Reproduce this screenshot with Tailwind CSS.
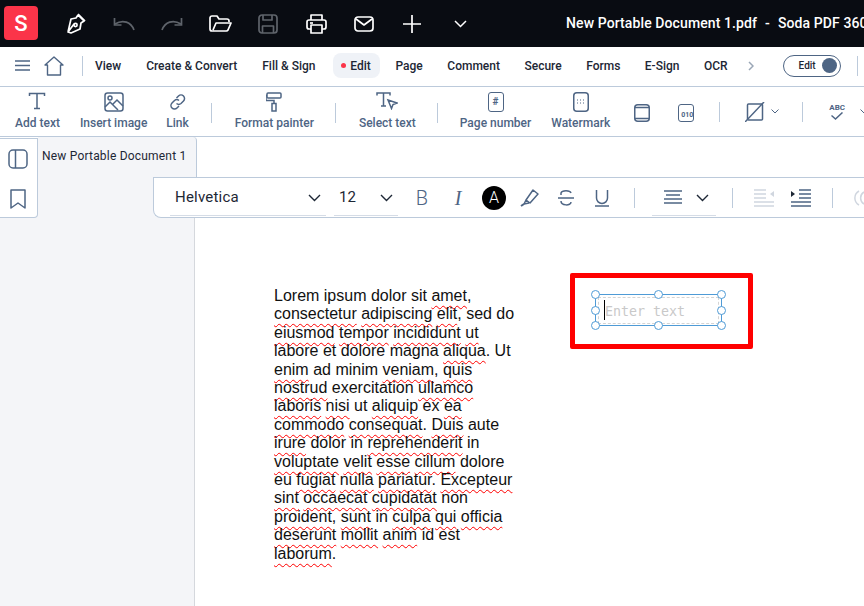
<!DOCTYPE html>
<html lang="en">
<head>
  <meta charset="UTF-8" />
  <title>New Portable Document 1.pdf - Soda PDF 360</title>
  <script src="https://cdn.jsdelivr.net/npm/@tailwindcss/browser@4"></script>
</head>
<body class="w-[864px] h-[606px] overflow-hidden bg-white font-['Roboto',sans-serif]">

  <!-- Title bar -->
  <header class="h-[47px] bg-[#090c12] flex items-center pl-1 text-white whitespace-nowrap overflow-hidden [&>*]:shrink-0">
    <div class="w-[34px] h-[34px] rounded bg-[#fb3449] flex items-center justify-center text-[22px] font-medium -mt-[1px]">S</div>
    <div class="ml-[14px] flex items-center">
      <div class="w-12 flex justify-center"><svg width="22" height="24" viewBox="0 0 22 24" fill="none" stroke="#fff" stroke-width="1.7" stroke-linejoin="round"><path d="M13 3l6 6-3 2-1 6-9 4-3-1 6-8M13 3l-2 3-5 1-3 13"/><circle cx="10.5" cy="13" r="1.6"/><path d="M13 2l7 7"/></svg></div>
      <div class="w-12 flex justify-center"><svg width="22" height="14" viewBox="0 0 22 14" fill="none" stroke="#5f646b" stroke-width="1.7"><path d="M21 13C18 5 10 2 2 7"/><path d="M1.500 1v7h7"/></svg></div>
      <div class="w-12 flex justify-center"><svg width="22" height="14" viewBox="0 0 22 14" fill="none" stroke="#5f646b" stroke-width="1.700"><path d="M1 13C4 5 12 2 20 7"/><path d="M20.500 1v7h-7"/></svg></div>
      <div class="w-12 flex justify-center"><svg width="23" height="18" viewBox="0 0 23 18" fill="none" stroke="#fff" stroke-width="1.7" stroke-linejoin="round"><path d="M3 16a2 2 0 0 1-2-2V3a2 2 0 0 1 2-2h5l2 3h8a2 2 0 0 1 2 2v1"/><path d="M3 16h14a2 2 0 0 0 2-1l3-7H7L4 15"/></svg></div>
      <div class="w-12 flex justify-center"><svg width="20" height="20" viewBox="0 0 20 20" fill="none" stroke="#5f646b" stroke-width="1.700" stroke-linejoin="round"><rect x="1" y="1" width="18" height="18" rx="3"/><path d="M5 1v5h9V1M4.500 19v-7h11v7"/></svg></div>
      <div class="w-12 flex justify-center"><svg width="21" height="20" viewBox="0 0 21 20" fill="none" stroke="#fff" stroke-width="1.700" stroke-linejoin="round"><path d="M5 6V1h11v5"/><rect x="1" y="6" width="19" height="9" rx="2"/><path d="M5 11h11v8H5z" fill="#090c12"/><path d="M4 9h3"/></svg></div>
      <div class="w-12 flex justify-center"><svg width="20" height="16" viewBox="0 0 20 16" fill="none" stroke="#fff" stroke-width="1.700" stroke-linejoin="round"><rect x="1" y="1" width="18" height="14" rx="3"/><path d="M2 3l8 6 8-6"/></svg></div>
      <div class="w-12 flex justify-center"><svg width="18" height="18" viewBox="0 0 18 18" stroke="#fff" stroke-width="1.700"><path d="M9 0v18M0 9h18"/></svg></div>
      <div class="w-12 flex justify-center"><svg width="13" height="8" viewBox="0 0 13 8" fill="none" stroke="#fff" stroke-width="1.500"><path d="M1 1l5.500 5.500L12 1"/></svg></div>
    </div>
    <div class="ml-[82px] text-[14px] font-medium tracking-[0.1px]">New Portable Document 1.pdf<span class="ml-[8px]">-</span><span class="ml-[8px]">Soda PDF 360</span></div>
  </header>

  <!-- Menu row -->
  <nav class="h-[40px] border-b border-[#bccadb] pb-[2px] flex items-center whitespace-nowrap text-[12px] font-medium text-[#1d2735] overflow-hidden [&>*]:shrink-0">
    <div class="w-[44px] flex justify-center"><svg width="15" height="11" viewBox="0 0 15 11" stroke="#4e6584" stroke-width="1.400"><path d="M0 1h15M0 5.500h15M0 10h15"/></svg></div>
    <div class="w-[20px] flex justify-center"><svg width="20" height="20" viewBox="0 0 20 20" fill="none" stroke="#4e6584" stroke-width="1.400" stroke-linejoin="round"><path d="M1 9l9-8 9 8h-2.500v10h-13V9z"/></svg></div>
    <div class="w-px h-5 bg-[#bccadb] ml-[18px] mr-[12px]"></div>
    <div class="flex items-center gap-[25px]">
      <span>View</span>
      <span>Create &amp; Convert</span>
      <span>Fill &amp; Sign</span>
      <span class="-ml-[8px] -mr-[9px] w-[47px] h-[25px] rounded-lg bg-[#eff2f7] flex items-center justify-center gap-[4px]"><span class="w-[5px] h-[5px] rounded-full bg-[#fb3449]"></span>Edit</span>
      <div class="flex items-center gap-[24.5px]">
        <span>Page</span>
        <span>Comment</span>
        <span>Secure</span>
        <span>Forms</span>
        <span>E-Sign</span>
        <span>OCR</span>
      </div>
    </div>
    <svg class="ml-[20px]" width="6" height="10" viewBox="0 0 6 10" fill="none" stroke="#9aa6b6" stroke-width="1.500"><path d="M1 1l4 4-4 4"/></svg>
    <div class="ml-[29px] w-[58px] h-[22px] rounded-full border border-[#4e6584] flex items-center justify-end pr-[3px] gap-[6px] text-[10px]">Edit<span class="w-[15px] h-[15px] rounded-full bg-[#4e6584]"></span></div>
    <div class="w-px h-5 bg-[#bccadb] ml-[16px]"></div>
  </nav>

  <!-- Tool row -->
  <section class="h-[50px] border-b border-[#bccadb] flex items-center pl-[15px] text-[12px] font-medium text-[#4e6584] whitespace-nowrap overflow-hidden [&>*]:shrink-0">
    <div class="flex flex-col items-center h-[40px] justify-between">
      <svg width="18" height="18" viewBox="0 0 18 18" fill="none" stroke="#4e6584" stroke-width="1.500"><path d="M1.500 4V1.500h15V4M9 1.500V16.500M6 16.500h6"/></svg>
      <span>Add text</span>
    </div>
    <div class="ml-[20px] flex flex-col items-center h-[40px] justify-between">
      <svg width="20" height="20" viewBox="0 0 20 20" fill="none" stroke="#4e6584" stroke-width="1.500"><rect x="1" y="1" width="18" height="18" rx="2.500"/><circle cx="6" cy="6" r="2"/><path d="M1 15l5-5 8 8M9 12l4-4 6 6"/></svg>
      <span>Insert image</span>
    </div>
    <div class="ml-[19px] flex flex-col items-center h-[40px] justify-between">
      <svg width="20" height="20" viewBox="0 0 20 20" fill="none" stroke="#4e6584" stroke-width="1.500"><path d="M8.500 6l2-2a3.500 3.500 0 0 1 5 5l-2.500 2.500a3.500 3.500 0 0 1-4.500 0"/><path d="M11 14l-2 2a3.500 3.500 0 0 1-5-5l2.500-2.500a3.500 3.500 0 0 1 4.500 0"/></svg>
      <span>Link</span>
    </div>
    <div class="w-px h-[20px] bg-[#bccadb] ml-[22px] mr-[23px] mt-[2px]"></div>
    <div class="flex flex-col items-center h-[40px] justify-between">
      <svg width="16" height="20" viewBox="0 0 16 20" fill="none" stroke="#4e6584" stroke-width="1.500"><rect x="1" y="1" width="14" height="5" rx="1"/><path d="M1 3.500H0v5h8v3"/><rect x="6" y="11.500" width="4" height="7.500"/></svg>
      <span>Format painter</span>
    </div>
    <div class="w-px h-[20px] bg-[#bccadb] ml-[21px] mr-[23px] mt-[2px]"></div>
    <div class="flex flex-col items-center h-[40px] justify-between">
      <svg width="22" height="18" viewBox="0 0 22 18" fill="none" stroke="#4e6584" stroke-width="1.500"><path d="M1 3.500V1h13v2.500M7.500 1v13M5 14h5M12 8l9 3-4 1.500-1.500 4z"/></svg>
      <span>Select text</span>
    </div>
    <div class="w-px h-[20px] bg-[#bccadb] ml-[21px] mr-[22px] mt-[2px]"></div>
    <div class="flex flex-col items-center h-[40px] justify-between">
      <div class="w-[16px] h-[20px] rounded-[3px] border-[1.5px] border-[#4e6584] flex items-center justify-center text-[10px] font-bold">#</div>
      <span>Page number</span>
    </div>
    <div class="ml-[20px] flex flex-col items-center h-[40px] justify-between">
      <svg width="16" height="20" viewBox="0 0 16 20" fill="none" stroke="#4e6584" stroke-width="1.500"><rect x="0.750" y="0.750" width="14.500" height="18.500" rx="3"/><path d="M4 8h8M4 11h8" stroke-width="1" stroke-dasharray="1 2"/></svg>
      <span>Watermark</span>
    </div>
    <svg class="ml-[24px] mt-[2px]" width="16" height="18" viewBox="0 0 16 18" fill="none" stroke="#4e6584" stroke-width="1.500"><rect x="0.750" y="0.750" width="14.500" height="16.500" rx="3"/><path d="M1 3.500h14M1 14.500h14"/></svg>
    <div class="ml-[28px] mt-[2px] w-[16px] h-[18px] rounded-[3px] border-[1.5px] border-[#4e6584] flex items-end justify-end text-[7px] leading-[10px] font-bold pb-[1px]">010</div>
    <div class="w-px h-[20px] bg-[#bccadb] ml-[25px] mr-[25px]"></div>
    <svg width="20" height="20" viewBox="0 0 20 20" fill="none" stroke="#4e6584" stroke-width="1.500"><rect x="2.500" y="2" width="15" height="16" rx="1"/><path d="M0 20L19 0"/></svg>
    <svg class="ml-[6px]" width="8" height="5" viewBox="0 0 8 5" fill="none" stroke="#4e6584"><path d="M0.500 0.500L4 4l3.500-3.500"/></svg>
    <div class="w-px h-[20px] bg-[#bccadb] ml-[23px] mr-[25px]"></div>
    <div class="flex flex-col items-center w-[18px] text-[8px] font-bold leading-[9px]">ABC<svg width="12" height="8" viewBox="0 0 12 8" fill="none" stroke="#4e6584" stroke-width="1.500"><path d="M0.500 3.500L4.500 7l7-6.500"/></svg></div>
    <svg class="ml-[14px]" width="8" height="5" viewBox="0 0 8 5" fill="none" stroke="#4e6584"><path d="M0.500 0.500L4 4l3.500-3.500"/></svg>
  </section>

  <!-- Workspace -->
  <main class="relative h-[469px] flex flex-col">
    <div class="h-[40px] shrink-0 flex">
      <div class="ml-[38px] w-[159px] h-[40px] bg-[#f4f5f8] border-r border-[#bccadb] rounded-tr-[4px] pl-[4px] pt-[10px] text-[12px] tracking-[0.2px] text-[#1d2735] whitespace-nowrap">New Portable Document 1</div>
    </div>
    <div class="flex-1 flex min-h-0">
      <aside class="w-[195px] shrink-0 bg-[#f4f5f8] border-r border-[#d5d8dd]"></aside>
      <div class="relative flex-1 bg-white">
        <!-- Page text -->
        <p class="absolute left-[79px] top-[110px] font-['Liberation_Sans',sans-serif] text-[16px] leading-[18.400px] text-[#111] whitespace-nowrap [&>u]:decoration-wavy [&>u]:decoration-[#ff0000] [&>u]:decoration-[1.2px] [&>u]:underline-offset-[4px] [&>u]:[text-decoration-skip-ink:none]">
          Lorem ipsum dolor sit <u>amet</u>,<br>
          <u>consectetur</u> <u>adipiscing</u> <u>elit</u>, sed do<br>
          <u>eiusmod</u> <u>tempor</u> <u>incididunt</u> <u>ut</u><br>
          labore et dolore magna <u>aliqua</u>. Ut<br>
          <u>enim</u> ad minim <u>veniam</u>, <u>quis</u><br>
          <u>nostrud</u> exercitation <u>ullamco</u><br>
          <u>laboris</u> <u>nisi</u> ut <u>aliquip</u> ex <u>ea</u><br>
          <u>commodo</u> <u>consequat</u>. <u>Duis</u> aute<br>
          <u>irure</u> dolor in <u>reprehenderit</u> in<br>
          <u>voluptate</u> <u>velit</u> <u>esse</u> <u>cillum</u> dolore<br>
          eu <u>fugiat</u> <u>nulla</u> <u>pariatur</u>. <u>Excepteur</u><br>
          <u>sint</u> <u>occaecat</u> <u>cupidatat</u> non<br>
          <u>proident</u>, <u>sunt</u> in <u>culpa</u> <u>qui</u> <u>officia</u><br>
          <u>deserunt</u> <u>mollit</u> <u>anim</u> id est<br>
          <u>laborum</u>.
        </p>
        <!-- Highlight around new text box -->
        <div class="absolute left-[375px] top-[96px] w-[183px] h-[76px] border-[5px] border-[#ff0000] rounded-[2px]"></div>
        <div class="absolute left-[400px] top-[117px] w-[127px] h-[32px] border border-[#4f9bd6]">
          <div class="absolute left-[2px] top-[2px] w-[121px] h-[27px] border border-dashed border-[#d4d4d4] font-['DejaVu_Sans_Mono',monospace] text-[13.300px] leading-[27px] text-[#c9c9c9] pl-[6px] whitespace-nowrap">Enter text</div>
          <div class="absolute left-[8px] top-[5px] w-px h-[20px] bg-black"></div>
          <span class="absolute -left-[5px] -top-[5px] w-[9px] h-[9px] rounded-full bg-white border border-[#4f9bd6]"></span>
          <span class="absolute left-[58px] -top-[5px] w-[9px] h-[9px] rounded-full bg-white border border-[#4f9bd6]"></span>
          <span class="absolute -right-[5px] -top-[5px] w-[9px] h-[9px] rounded-full bg-white border border-[#4f9bd6]"></span>
          <span class="absolute -left-[5px] top-[11px] w-[9px] h-[9px] rounded-full bg-white border border-[#4f9bd6]"></span>
          <span class="absolute -right-[5px] top-[11px] w-[9px] h-[9px] rounded-full bg-white border border-[#4f9bd6]"></span>
          <span class="absolute -left-[5px] -bottom-[5px] w-[9px] h-[9px] rounded-full bg-white border border-[#4f9bd6]"></span>
          <span class="absolute left-[58px] -bottom-[5px] w-[9px] h-[9px] rounded-full bg-white border border-[#4f9bd6]"></span>
          <span class="absolute -right-[5px] -bottom-[5px] w-[9px] h-[9px] rounded-full bg-white border border-[#4f9bd6]"></span>
        </div>
      </div>
    </div>

    <!-- Side panel buttons -->
    <div class="absolute left-0 top-[1px] w-[38px] h-[80px] bg-white border border-l-0 border-[#bccadb] rounded-br-[4px] flex flex-col items-center pt-[10px] gap-[20px]">
      <svg class="-ml-[2px]" width="20" height="20" viewBox="0 0 20 20" fill="none" stroke="#4e6584" stroke-width="1.500"><rect x="1" y="1" width="18" height="18" rx="4"/><path d="M7.500 1v18"/></svg>
      <svg class="-ml-[2px]" width="16" height="20" viewBox="0 0 16 20" fill="none" stroke="#4e6584" stroke-width="1.500" stroke-linejoin="round"><path d="M1 1h14v18l-7-5-7 5z"/></svg>
    </div>

    <!-- Floating format bar -->
    <div class="absolute left-[153px] top-[40px] w-[720px] h-[41px] bg-white border border-r-0 border-[#bccadb] rounded-bl-lg flex items-center pl-[16px] text-[#4e6584] whitespace-nowrap overflow-hidden [&>*]:shrink-0">
      <div class="w-[156px] h-[36px] border-b border-[#d5dce6] flex items-center justify-between pl-[5px] pr-[5px] text-[15px] tracking-[0.2px] text-[#1d2735] mt-[1px]">Helvetica<svg width="13" height="8" viewBox="0 0 13 8" fill="none" stroke="#1d2735" stroke-width="1.400"><path d="M1 1l5.500 5.500L12 1"/></svg></div>
      <div class="ml-[8px] w-[64px] h-[36px] border-b border-[#d5dce6] flex items-center justify-between pl-[5px] pr-[5px] text-[15px] text-[#1d2735] mt-[1px]">12<svg width="13" height="8" viewBox="0 0 13 8" fill="none" stroke="#1d2735" stroke-width="1.400"><path d="M1 1l5.500 5.500L12 1"/></svg></div>
      <span class="ml-[16px] w-[16px] text-center text-[20px] font-light">B</span>
      <span class="ml-[20px] w-[16px] text-center text-[20px] font-['Liberation_Serif',serif] italic">I</span>
      <span class="ml-[16px] w-[24px] h-[24px] rounded-full bg-black text-white flex items-center justify-center text-[16px] font-light">A</span>
      <svg class="ml-[14px]" width="20" height="18" viewBox="0 0 20 18" fill="none" stroke="#4e6584" stroke-width="1.500" stroke-linejoin="round"><path d="M13 1l5 4-8 9-4-3zM6 11l-2 4 0 0 5-1"/><path d="M1 17l3-2" stroke-width="2"/></svg>
      <svg class="ml-[17px]" width="18" height="18" viewBox="0 0 18 18" fill="none" stroke="#4e6584" stroke-width="1.500"><path d="M1 9h16M14 4C13 1 5 1 4 4v2M4 12c0 5 10 5 10 1"/></svg>
      <svg class="ml-[19px]" width="16" height="18" viewBox="0 0 16 18" fill="none" stroke="#4e6584" stroke-width="1.500"><path d="M2.500 1v8a5.500 5.500 0 0 0 11 0V1M1 17h14"/></svg>
      <div class="w-px h-[20px] bg-[#bccadb] ml-[24px] mr-[17px]"></div>
      <div class="w-[64px] h-[36px] border-b border-[#d5dce6] flex items-center pl-[12px] gap-[14px] mt-[1px]">
        <svg width="18" height="18" viewBox="0 0 18 18" stroke="#4e6584" stroke-width="1.500"><path d="M0 2h18M2 6h14M0 10h18M0 14h18"/></svg>
        <svg width="13" height="8" viewBox="0 0 13 8" fill="none" stroke="#1d2735" stroke-width="1.400"><path d="M1 1l5.500 5.500L12 1"/></svg>
      </div>
      <div class="w-px h-[20px] bg-[#bccadb] ml-[16px] mr-[21px]"></div>
      <svg width="20" height="18" viewBox="0 0 20 18" stroke="#d0d6df" stroke-width="1.500"><path d="M0 1h12M0 5h12M0 9h12M0 13h20M0 17h20"/><path d="M20 2v6l-4-3z" fill="#d0d6df" stroke="none"/></svg>
      <svg class="ml-[17px]" width="20" height="18" viewBox="0 0 20 18" stroke="#4e6584" stroke-width="1.500"><path d="M8 1h12M8 5h12M8 9h12M0 13h20M0 17h20"/><path d="M0 2v6l4-3z" fill="#1d2735" stroke="none"/></svg>
      <div class="w-px h-[20px] bg-[#bccadb] ml-[21px] mr-[20px]"></div>
      <svg width="16" height="18" viewBox="0 0 16 18" fill="none" stroke="#d0d6df" stroke-width="1.500"><path d="M6 2a8 8 0 0 0 0 14M11 3a7 7 0 0 0 0 12"/></svg>
    </div>
  </main>
</body>
</html>
